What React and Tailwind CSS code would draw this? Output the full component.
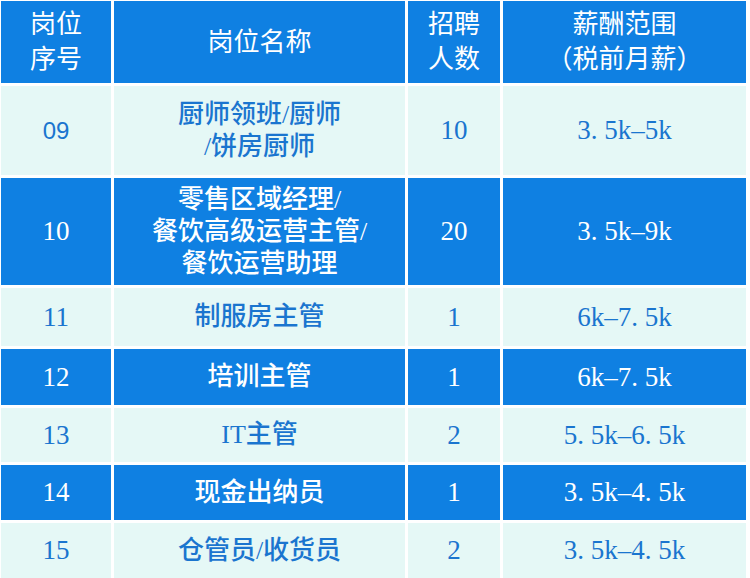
const rows = [
  { no: "09", noSans: true, name: ["厨师领班/厨师", "/饼房厨师"], count: "10", pay: "3. 5k–5k", h: "h-[89px]", dark: false },
  { no: "10", name: ["零售区域经理/", "餐饮高级运营主管/", "餐饮运营助理"], count: "20", pay: "3. 5k–9k", h: "h-[107px]", dark: true },
  { no: "11", name: ["制服房主管"], count: "1", pay: "6k–7. 5k", h: "h-[58px]", dark: false },
  { no: "12", name: ["培训主管"], count: "1", pay: "6k–7. 5k", h: "h-[56px]", dark: true },
  { no: "13", name: ["IT主管"], count: "2", pay: "5. 5k–6. 5k", h: "h-[54px]", dark: false },
  { no: "14", name: ["现金出纳员"], count: "1", pay: "3. 5k–4. 5k", h: "h-[55px]", dark: true },
  { no: "15", name: ["仓管员/收货员"], count: "2", pay: "3. 5k–4. 5k", h: "h-[55px]", dark: false },
];

function Cell({ children, dark, h, sans }) {
  return (
    <div
      className={`${h} flex flex-col items-center justify-center text-center ${
        dark ? "bg-[#0f80e2] text-white" : "bg-[#e5f8f6] text-[#1a75cf]"
      } ${
        sans
          ? "font-['Liberation_Sans','Noto_Sans_CJK_SC',sans-serif]"
          : "font-['Liberation_Serif','Noto_Sans_CJK_SC',serif]"
      }`}
    >
      {children}
    </div>
  );
}

export default function App() {
  return (
    <div className="w-[750px] h-[578px] bg-white pt-px pl-px overflow-hidden">
      <div className="grid grid-cols-[110px_291px_92px_243px] gap-[3px]">
        {/* 表头 */}
        <Cell dark h="h-[82px]" sans>
          <div className="text-[26px] leading-[35px]">岗位</div>
          <div className="text-[26px] leading-[35px]">序号</div>
        </Cell>
        <Cell dark h="h-[82px]" sans>
          <div className="text-[26px] leading-[35px]">岗位名称</div>
        </Cell>
        <Cell dark h="h-[82px]" sans>
          <div className="text-[26px] leading-[35px]">招聘</div>
          <div className="text-[26px] leading-[35px]">人数</div>
        </Cell>
        <Cell dark h="h-[82px]" sans>
          <div className="text-[26px] leading-[35px]">薪酬范围</div>
          <div className="text-[26px] leading-[35px]">（税前月薪）</div>
        </Cell>

        {rows.map((r) => (
          <>
            <Cell key={r.no + "a"} dark={r.dark} h={r.h} sans={r.noSans}>
              <span className={r.noSans ? "text-[24px]" : "text-[27px]"}>{r.no}</span>
            </Cell>
            <Cell key={r.no + "b"} dark={r.dark} h={r.h}>
              {r.name.map((line) => (
                <div key={line} className="text-[26px] leading-[32px] font-medium">
                  {line}
                </div>
              ))}
            </Cell>
            <Cell key={r.no + "c"} dark={r.dark} h={r.h}>
              <span className="text-[27px]">{r.count}</span>
            </Cell>
            <Cell key={r.no + "d"} dark={r.dark} h={r.h}>
              <span className="text-[27px] whitespace-pre">{r.pay}</span>
            </Cell>
          </>
        ))}
      </div>
    </div>
  );
}
